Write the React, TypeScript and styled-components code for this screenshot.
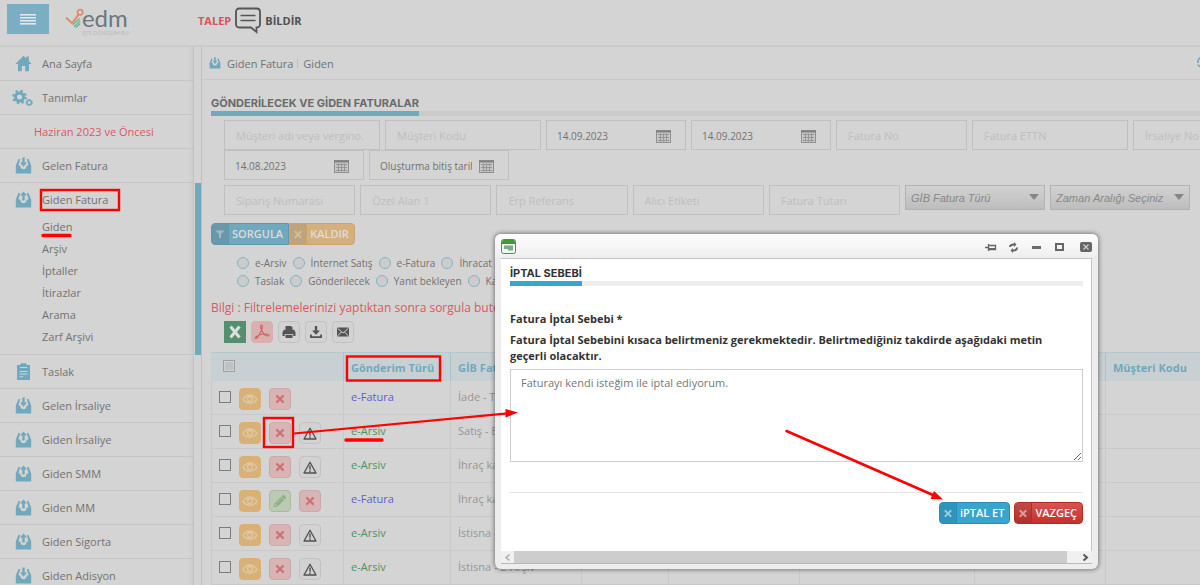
import React from "react";
import styled, { createGlobalStyle, css } from "styled-components";
import { FaTimes, FaFilter, FaPencilAlt } from "react-icons/fa";

const c = {
  page: "#d4d4d4",
  line: "#c5c5c5",
  accent: "#70a8bd",
  text: "#727272",
  faint: "#bebebe",
  red: "#d85a5e",
};

const Global = createGlobalStyle`
  * { box-sizing: border-box; }
  html, body { margin: 0; height: 100%; overflow: hidden; background: ${c.page}; }
  body, input, select, button, textarea { font-family: "Open Sans", "Noto Sans", sans-serif; }
  #root { height: 100%; }
`;

const Page = styled.div`
  position: relative;
  height: 100%;
  display: flex;
  flex-direction: column;
  overflow: hidden;
  color: ${c.text};
  font-size: 11px;
`;

/* ---------- top bar ---------- */

const TopBar = styled.header`
  flex: none;
  height: 47px;
  padding: 0 7px;
  display: flex;
  align-items: flex-start;
  border-bottom: 2px solid #cbcbcb;
`;

const MenuButton = styled.button`
  width: 42px;
  height: 30px;
  margin-top: 4px;
  padding: 0 13px;
  border: 0;
  background: #7caec3;
  display: flex;
  flex-direction: column;
  justify-content: center;
  gap: 2px;
  span {
    height: 1px;
    background: #e6e6e6;
    box-shadow: 0 1px 0 #b9cfd8;
  }
`;

const Brand = styled.a`
  display: flex;
  width: 64px;
  margin: 7px 0 0 16px;
  text-decoration: none;
`;

const BrandWords = styled.span`
  display: flex;
  flex-direction: column;
  margin-left: -2px;
  color: #6c7780;
  font: 400 24px/22px Lato, sans-serif;
  small {
    margin-top: 2px;
    color: #b8b8b8;
    font-size: 5px;
    line-height: 5px;
    white-space: nowrap;
  }
`;

const Support = styled.a`
  display: flex;
  align-items: center;
  gap: 4px;
  margin: 7px 0 0 69px;
  color: #505050;
  font-size: 11px;
  font-weight: 700;
  text-decoration: none;
  em {
    font-style: normal;
    color: #d4555a;
  }
`;

/* ---------- side menu ---------- */

const Body = styled.div`
  flex: 1;
  min-height: 0;
  display: flex;
`;

const Side = styled.nav`
  flex: none;
  width: 194px;
  border-right: 1px solid #c2c2c2;
  box-shadow: inset -4px 0 4px -3px #c8c8c8;
`;

const SideItem = styled.a<{ $open?: boolean }>`
  display: flex;
  align-items: center;
  height: 34px;
  padding-left: 15px;
  gap: 10px;
  border-bottom: 1px solid ${(p) => (p.$open ? "transparent" : c.line)};
  color: ${c.text};
  font-size: 11px;
  text-decoration: none;
  svg {
    flex: none;
    width: 17px;
    color: ${c.accent};
  }
  svg[data-wide] {
    width: 21px;
    margin: 0 -1px 0 -3px;
  }
`;

const SideNote = styled(SideItem)`
  padding-left: 34px;
  color: ${c.red};
`;

const SubMenu = styled.div`
  display: flex;
  flex-direction: column;
  margin-top: -1px;
  padding: 0 0 6px 42px;
  border-bottom: 1px solid ${c.line};
  a {
    color: ${c.text};
    line-height: 22px;
    text-decoration: none;
  }
`;

const SideScroll = styled.div`
  flex: none;
  width: 8px;
  padding: 136px 0 0 1px;
  border-right: 1px solid #bfbfbf;
  &::before {
    content: "";
    display: block;
    height: 172px;
    background: ${c.accent};
  }
`;

/* ---------- main column ---------- */

const Main = styled.main`
  flex: 1;
  min-width: 0;
  overflow: hidden;
`;

const Crumbs = styled.div`
  display: flex;
  align-items: center;
  height: 33px;
  padding-left: 7px;
  border-bottom: 1px solid #c9c9c9;
  svg {
    width: 12px;
    margin-right: 6px;
    color: ${c.accent};
  }
  span + span {
    margin-left: 4px;
    padding-left: 5px;
    border-left: 1px solid #bcbcbc;
    line-height: 9px;
  }
`;

const Reload = styled.button`
  margin: 0 -9px 0 auto;
  padding: 0;
  border: 0;
  background: none;
  && svg {
    width: 12px;
    margin: 0;
  }
`;

const Heading = styled.h1<{ $modal?: boolean }>`
  display: flex;
  margin: 0;
  border-bottom: 5px solid ${(p) => (p.$modal ? "#eeeeee" : "#cbcbcb")};
  color: ${(p) => (p.$modal ? "#333" : "#6a6a6a")};
  font: 700 11px/15px Inter, "Open Sans", sans-serif;
  span {
    margin-bottom: -5px;
    padding-top: 2px;
    border-bottom: 5px solid ${(p) => (p.$modal ? "#38a5cf" : c.accent)};
  }
`;

const Content = styled.div`
  padding: 14px 0 0 9px;
`;

const Fields = styled.div<{ $gapAbove?: number }>`
  display: flex;
  gap: 5px;
  margin: ${(p) => p.$gapAbove ?? 0}px 10px 0 13px;
`;

const fieldBox = css`
  height: 30px;
  border: 1px solid #c0c0c0;
  background: transparent;
`;

const TextField = styled.input<{ $w?: number }>`
  ${fieldBox}
  ${(p) => (p.$w ? `flex: none; width: ${p.$w}px;` : "flex: 1; min-width: 0;")}
  padding: 0 11px;
  color: ${c.text};
  font-size: 11px;
  &::placeholder {
    color: ${c.faint};
    opacity: 1;
  }
`;

const DateBox = styled.label`
  ${fieldBox}
  flex: none;
  width: 140px;
  padding: 2px 14px 0 10px;
  display: flex;
  align-items: center;
  justify-content: space-between;
  input {
    width: 92px;
    padding: 0;
    border: 0;
    background: transparent;
    color: ${c.text};
    font-size: 10px;
  }
  input::placeholder {
    color: ${c.text};
    opacity: 1;
  }
`;

const SelectBox = styled.label`
  position: relative;
  flex: none;
  width: 140px;
  height: 25px;
  select {
    appearance: none;
    width: 100%;
    height: 100%;
    padding: 0 0 0 5px;
    border: 1px solid #b2b2b2;
    border-radius: 0;
    background: linear-gradient(#d2d2d2, #bdbdbd);
    color: #888;
    font: italic 11px "Liberation Sans", Arial, sans-serif;
  }
  &::after {
    content: "";
    position: absolute;
    right: 6px;
    top: 9px;
    border: 5px solid transparent;
    border-top: 6px solid #868686;
    border-bottom: 0;
    pointer-events: none;
  }
`;

const tones = {
  query: ["#70a8bd", "#6898aa", "#6396a9"],
  clear: ["#d6b07c", "#c1a379", "#c9a572"],
  confirm: ["#38a5cf", "#3093b9", "#2b8db1"],
  cancel: ["linear-gradient(#d9534f, #c9302c)", "linear-gradient(#c04a46, #b12e2b)", "#b52b27"],
};

const ActionButton = styled.button<{ $tone: keyof typeof tones; $soft?: boolean }>`
  display: flex;
  align-items: stretch;
  height: 22px;
  padding: 0;
  overflow: hidden;
  border: 1px solid ${(p) => tones[p.$tone][2]};
  border-radius: 4px;
  background: ${(p) => tones[p.$tone][0]};
  color: ${(p) => (p.$soft ? "#dcdcdc" : "#fff")};
  font-size: 11px;
  font-weight: 600;
  line-height: 20px;
  i {
    display: flex;
    align-items: center;
    justify-content: center;
    width: 17px;
    border-right: 1px solid ${(p) => tones[p.$tone][2]};
    background: ${(p) => tones[p.$tone][1]};
  }
  i svg {
    width: 8px;
    opacity: 0.5;
  }
  span {
    padding: 0 5px 0 3px;
  }
`;

const ButtonPair = styled.div`
  display: flex;
  margin-top: 8px;
  ${ActionButton}:first-child {
    border-radius: 4px 0 0 4px;
  }
  ${ActionButton}:last-child {
    border-radius: 0 4px 4px 0;
  }
`;

const Radios = styled.div`
  display: flex;
  flex-direction: column;
  padding: 9px 0 0 26px;
  > div {
    display: flex;
    gap: 6px;
    height: 18px;
  }
  label {
    display: flex;
    align-items: center;
    gap: 6px;
    flex: none;
    white-space: nowrap;
    font-size: 10px;
  }
  input {
    appearance: none;
    width: 12px;
    height: 12px;
    margin: 0;
    border: 1px solid #83b3c5;
    border-radius: 50%;
    background: #cccccc;
  }
`;

const Info = styled.p`
  margin: 9px 0 4px;
  color: ${c.red};
  font-size: 12px;
  line-height: 18px;
  white-space: nowrap;
`;

const Tools = styled.div`
  display: flex;
  gap: 5px;
  margin: 0 0 9px 13px;
`;

const kinds = {
  excel: ["#54906f", "#54906f", "#dedede"],
  pdf: ["#d9b0b0", "#d9b0b0", "#d26468"],
  plain: ["#d2d2d2", "#c2c2c2", "#555555"],
  view: ["#d9b076", "#d9b076", "#ddcaa8"],
  remove: ["#d8b4b4", "#cba9a9", "#cd7376"],
  edit: ["#bccab3", "#a7bd9c", "#8fae81"],
};

const IconButton = styled.button<{ $kind: keyof typeof kinds }>`
  flex: none;
  display: flex;
  align-items: center;
  justify-content: center;
  width: 22px;
  height: 22px;
  padding: 0;
  border: 1px solid ${(p) => kinds[p.$kind][1]};
  border-radius: ${(p) => (p.$kind === "excel" ? 0 : 4)}px;
  background: ${(p) => kinds[p.$kind][0]};
  color: ${(p) => kinds[p.$kind][2]};
`;

/* ---------- invoice table ---------- */

const Table = styled.table`
  width: 100%;
  border-collapse: separate;
  border-spacing: 0;
  table-layout: fixed;
  th {
    height: 29px;
    padding: 0 0 0 7px;
    border-top: 1px solid #b4c8cf;
    border-left: 1px solid #a5c3cf;
    background: #c8d0d3;
    color: ${c.accent};
    font-size: 11px;
    font-weight: 700;
    text-align: left;
    white-space: nowrap;
  }
  td {
    height: 34px;
    padding: 8px 0 0 7px;
    border-left: 1px solid #c9c9c9;
    border-bottom: 1px solid #c9c9c9;
    vertical-align: top;
    line-height: 16px;
    color: #969696;
    white-space: nowrap;
    overflow: hidden;
  }
  th:first-child {
    padding: 0 0 3px 11px;
    border-left-color: #c8d0d3;
  }
  td:first-child {
    padding-top: 7px;
  }
`;

const Check = styled.input`
  appearance: none;
  display: block;
  flex: none;
  width: 12px;
  height: 12px;
  margin: 3px 0 0;
  border: 1px solid #7d7d7d;
  th & {
    margin: 0;
    border-color: #a0a0a0;
    background: #bfc2c3;
    box-shadow: inset 0 0 0 1px #d2d2d2;
  }
`;

const RowTools = styled.div`
  display: flex;
  gap: 8px;
`;

const Kind = styled.span<{ $archive: boolean }>`
  color: ${(p) => (p.$archive ? "#50915c" : "#5d5dd0")};
`;

/* ---------- dialog ---------- */

const Dialog = styled.section`
  position: absolute;
  top: 234px;
  left: 495px;
  right: 102px;
  padding: 0 6px 5px;
  border-radius: 6px;
  background: #ededed;
  box-shadow: 0 0 4px 1px rgba(0, 0, 0, 0.42);
`;

const DialogBar = styled.div`
  display: flex;
  align-items: center;
  height: 24px;
  margin: 0 -6px;
  padding: 0 6px;
  border-radius: 6px 6px 0 0;
  background: linear-gradient(#fdfdfd, #eeeeee);
`;

const BarTools = styled.div`
  display: flex;
  gap: 10px;
  margin: 2px 0 0 auto;
  button {
    display: flex;
    width: 13px;
    height: 12px;
    padding: 0;
    border: 0;
    background: none;
  }
  button:last-child {
    margin-left: 3px;
  }
`;

const DialogBody = styled.div`
  padding: 5px 8px 0 9px;
  height: 293px;
  border: solid #c6c6c6;
  border-width: 1px 1px 0 0;
  background: #fff;
`;

const Prompt = styled.label`
  display: block;
  margin-top: 25px;
  color: #333;
  font-size: 11px;
  font-weight: 700;
  line-height: 16px;
  span {
    display: block;
    margin-top: 5px;
    padding-right: 20px;
  }
`;

const Reason = styled.textarea`
  display: block;
  width: 100%;
  height: 93px;
  margin-top: 5px;
  padding: 5px 10px;
  border: 1px solid #cfcfcf;
  color: #777;
  font-size: 11px;
  font-weight: 400;
  line-height: 16px;
`;

const DialogActions = styled.div`
  display: flex;
  justify-content: flex-end;
  gap: 4px;
  margin-top: 30px;
  padding-top: 9px;
  border-top: 1px solid #e4e4e4;
`;

const HScroll = styled.div`
  display: flex;
  align-items: center;
  height: 13px;
  background: #f0f0f0;
  border-bottom: 1px solid #b9b9b9;
  svg {
    flex: none;
    width: 13px;
  }
  div {
    flex: 1;
    height: 100%;
    margin-right: 12px;
    background: #cdcdcd;
  }
`;

const Marks = styled.svg`
  position: absolute;
  left: 0;
  top: 0;
  pointer-events: none;
`;

/* ---------- drawings ---------- */

const Tray = ({ up }: { up?: boolean }) => (
  <svg viewBox="0 0 17 17" fill="currentColor" aria-hidden>
    <path d="M3.5 2H5.2L3.4 8.6H5.2C5.4 11 6.6 12.2 8.5 12.2S11.6 11 11.8 8.6H13.6L11.8 2H13.5L16.2 8.6V16.4H.8V8.6Z" />
    <path d={up ? "M8.5 0.4L12 4.4H9.7V9.6H7.3V4.4H5Z" : "M7.3 0.4H9.7V5.4H12L8.5 9.8L5 5.4H7.3Z"} />
  </svg>
);

const Home = () => (
  <svg viewBox="0 0 17 17" fill="currentColor" aria-hidden>
    <path d="M8.5 .8L11.2 3.5V1.5H13.8V6L16.6 9H14V16.3H10.2V11H6.8V16.3H3V9H.4Z" />
  </svg>
);

const Gears = () => (
  <svg data-wide="" viewBox="0 0 21 18" fill="none" stroke="currentColor" aria-hidden>
    <circle cx="7.5" cy="8" r="4" strokeWidth="3" />
    <circle cx="7.5" cy="8" r="6.3" strokeWidth="2" strokeDasharray="2.5 2.45" />
    <circle cx="17.2" cy="13.5" r="2.2" strokeWidth="1.4" />
    <circle cx="17.2" cy="13.5" r="3.2" strokeWidth="1" strokeDasharray="1.3 1.21" />
  </svg>
);

const Clipboard = () => (
  <svg viewBox="0 0 17 17" aria-hidden>
    <path d="M2 2H5L6 .3H11L12 2H15V17H2Z" fill="currentColor" />
    <path d="M5 4.5H12M4.5 8.5H12.5M4.5 11H12.5M4.5 13.7H8" stroke="#c9d3d7" strokeWidth="1" />
  </svg>
);

const Calendar = () => (
  <svg width="15" height="13" viewBox="0 0 15 13" aria-hidden>
    <rect x=".5" y=".5" width="14" height="12" fill="#c6c6c6" stroke="#8f8f8f" />
    <path d="M0 1.5H15" stroke="#808080" strokeWidth="2" />
    <path d="M2 4.5H13M2 7.5H13M2 10.5H13M4.5 3.5V11.5M7.5 3.5V11.5M10.5 3.5V11.5" stroke="#969696" />
  </svg>
);

const Printer = () => (
  <svg width="14" height="14" viewBox="0 0 14 14" fill="currentColor" aria-hidden>
    <path d="M3.5 1H9L10.5 2.5V5H3.5Z" />
    <path d="M2 4.8H12L13.5 7V11H11.3V9H2.7V11H.5V7Z" />
    <path d="M3.5 9.800H10.5V13H3.5Z" />
  </svg>
);

const Download = () => (
  <svg width="14" height="14" viewBox="0 0 14 14" fill="currentColor" aria-hidden>
    <path d="M5.8 1H8.2V5.5H11L7 9.8L3 5.5H5.8Z" />
    <path d="M1 9.5H2.8V11.2H11.2V9.5H13V13H1Z" />
  </svg>
);

const Envelope = () => (
  <svg width="12" height="10" viewBox="0 0 12 10" aria-hidden>
    <rect width="12" height="9" y=".5" rx="1" fill="currentColor" />
    <path d="M.8 1.5L6 6L11.2 1.5M.8 8.8L4.3 5M11.2 8.8L7.7 5" fill="none" stroke="#d2d2d2" />
  </svg>
);

const Eye = () => (
  <svg width="16" height="12" viewBox="0 0 16 12" fill="none" stroke="currentColor" aria-hidden>
    <path d="M1 6.5C3 3.4 5.3 2 8 2S13 3.4 15 6.5C13 9.2 10.8 10.3 8 10.3S3 9.2 1 6.5Z" strokeWidth="1.3" />
    <circle cx="8" cy="6" r="2.5" strokeWidth="1.3" />
  </svg>
);

const Warning = () => (
  <svg width="14" height="13" viewBox="0 0 14 13" fill="none" stroke="#505050" aria-hidden>
    <path d="M7 1.2L13 12H1Z" strokeWidth="1.3" strokeLinejoin="round" />
    <path d="M7 4.5V8.7M7 9.6V11" strokeWidth="1.4" />
  </svg>
);

const Pdf = () => (
  <svg width="16" height="16" viewBox="0 0 16 16" fill="none" stroke="currentColor" strokeWidth="1.2" aria-hidden>
    <path d="M7.5 1C6 1 6.6 4.5 8 7C9.5 9.8 12 12 14 12C16 11.6 14.5 10 11 10C7 10 3.5 11.5 1.6 13.3C.6 14.8 2.4 15 4 12.6C6 9.5 8.6 4 8.3 1.8Z" />
  </svg>
);

const AppIcon = () => (
  <svg width="15" height="15" viewBox="0 0 15 15" aria-hidden>
    <rect x=".5" y=".5" width="14" height="14" rx="2" fill="#f1f4f1" stroke="#6a7a6c" />
    <path d="M1 2.5Q1 1 2.5 1H12.5Q14 1 14 2.5V5H1Z" fill="#3f9d2f" />
    <path d="M3 6.5H12V11.5H7V10H3Z" fill="#7cab8c" />
  </svg>
);

/* ---------- data ---------- */

const submenu = ["Giden", "Arşiv", "İptaller", "İtirazlar", "Arama", "Zarf Arşivi"];

const lowerMenu: [string, boolean][] = [
  ["Gelen İrsaliye", false],
  ["Giden İrsaliye", true],
  ["Giden SMM", true],
  ["Giden MM", true],
  ["Giden Sigorta", true],
  ["Giden Adisyon", false],
];

const radioRows = [
  ["e-Arsiv", "İnternet Satış", "e-Fatura", "İhracat"],
  ["Taslak", "Gönderilecek", "Yanıt bekleyen", "Kabul"],
];

type Tool = "remove" | "warn" | "edit";
const rows: { archive: boolean; note: string; tools: Tool[] }[] = [
  { archive: false, note: "İade - Temel", tools: ["remove"] },
  { archive: true, note: "Satış - E-Arşiv", tools: ["remove", "warn"] },
  { archive: true, note: "İhraç kayıtlı", tools: ["remove", "warn"] },
  { archive: false, note: "İhraç kayıtlı", tools: ["edit", "remove"] },
  { archive: true, note: "İstisna - E-Arşiv", tools: ["remove", "warn"] },
  { archive: true, note: "İstisna - E-Arşiv", tools: ["remove", "warn"] },
];

const DateField = ({ label, value }: { label: string; value?: string }) => (
  <DateBox>
    <input aria-label={label} placeholder={label} defaultValue={value} />
    <Calendar />
  </DateBox>
);

const RowTool = ({ tool }: { tool: Tool }) => {
  if (tool === "remove") return <IconButton $kind="remove" aria-label="İptal"><FaTimes size={12} /></IconButton>;
  if (tool === "edit") return <IconButton $kind="edit" aria-label="Düzenle"><FaPencilAlt size={12} /></IconButton>;
  return <IconButton $kind="plain" aria-label="Uyarı"><Warning /></IconButton>;
};

export default function App() {
  return (
    <Page>
      <Global />
      <TopBar>
        <MenuButton aria-label="Menü"><span /><span /><span /><span /></MenuButton>
        <Brand href="#">
          <svg width="20" height="24" viewBox="0 0 20 24" fill="none" aria-hidden>
            <path d="M1 10.5L7.5 16.5L15 6.5" stroke="#d98f6c" strokeWidth="2.2" />
            <circle cx="16" cy="4.8" r="2.8" stroke="#d98f6c" strokeWidth="1.8" />
            <path d="M8.5 18L15.5 11.5M9.5 20.2L16 14M11.5 21L16 16.8" stroke="#68ae8c" strokeWidth="1.3" />
          </svg>
          <BrandWords>edm<small>İŞTE DÖNÜŞÜM BU!</small></BrandWords>
        </Brand>
        <Support href="#">
          <em>TALEP</em>
          <svg width="26" height="27" viewBox="0 0 26 27" fill="none" stroke="#555" aria-hidden>
            <path d="M4.5 1.5H21.5Q25 1.5 25 5V17Q25 20.5 21.5 20.5V25L16 20.5H4.5Q1 20.5 1 17V5Q1 1.5 4.5 1.5Z" strokeWidth="1.8" />
            <path d="M5.5 8.5H20.5M5.5 13.5H20.5" strokeWidth="1.6" />
          </svg>
          BİLDİR
        </Support>
      </TopBar>

      <Body>
        <Side>
          <SideItem href="#"><Home />Ana Sayfa</SideItem>
          <SideItem href="#"><Gears />Tanımlar</SideItem>
          <SideNote href="#">Haziran 2023 ve Öncesi</SideNote>
          <SideItem href="#"><Tray />Gelen Fatura</SideItem>
          <SideItem href="#" $open><Tray up />Giden Fatura</SideItem>
          <SubMenu>{submenu.map((s) => <a href="#" key={s}>{s}</a>)}</SubMenu>
          <SideItem href="#"><Clipboard />Taslak</SideItem>
          {lowerMenu.map(([name, up]) => (
            <SideItem href="#" key={name}><Tray up={up} />{name}</SideItem>
          ))}
        </Side>
        <SideScroll />

        <Main>
          <Crumbs>
            <Tray />
            <span>Giden Fatura</span>
            <span>Giden</span>
            <Reload aria-label="Yenile">
              <svg height="12" viewBox="0 0 12 12" fill="none" stroke="currentColor" strokeWidth="1.6">
                <path d="M1 7V4.5Q2.5 1 6 1T11 4.5M11 7Q10 11 6 11T1 8.5" />
              </svg>
            </Reload>
          </Crumbs>
          <Content>
            <Heading><span>GÖNDERİLECEK VE GİDEN FATURALAR</span></Heading>
            <Fields $gapAbove={4}>
              <TextField $w={156} aria-label="Müşteri adı" placeholder="Müşteri adı veya vergino." />
              <TextField $w={156} aria-label="Müşteri Kodu" placeholder="Müşteri Kodu" />
              <DateField label="Başlangıç tarihi" value="14.09.2023" />
              <DateField label="Bitiş tarihi" value="14.09.2023" />
              <TextField $w={131} aria-label="Fatura No" placeholder="Fatura No" />
              <TextField $w={156} aria-label="Fatura ETTN" placeholder="Fatura ETTN" />
              <TextField $w={131} aria-label="İrsaliye No" placeholder="İrsaliye No" />
            </Fields>
            <Fields>
              <DateField label="Oluşturma tarihi" value="14.08.2023" />
              <DateField label="Oluşturma bitiş tarihi" />
            </Fields>
            <Fields $gapAbove={5}>
              {["Sipariş Numarası", "Özel Alan 1", "Erp Referans", "Alıcı Etiketi", "Fatura Tutarı"].map((p) => (
                <TextField key={p} aria-label={p} placeholder={p} />
              ))}
              {["GİB Fatura Türü", "Zaman Aralığı Seçiniz"].map((p) => (
                <SelectBox key={p}>
                  <select aria-label={p}><option>{p}</option></select>
                </SelectBox>
              ))}
            </Fields>
            <ButtonPair>
              <ActionButton $tone="query" $soft><i><FaFilter /></i><span>SORGULA</span></ActionButton>
              <ActionButton $tone="clear" $soft><i><FaTimes /></i><span>KALDIR</span></ActionButton>
            </ButtonPair>
            <Radios>
              {radioRows.map((group, i) => (
                <div key={i}>
                  {group.map((r) => <label key={r}><input type="radio" name={"filter" + i} />{r}</label>)}
                </div>
              ))}
            </Radios>
            <Info>Bilgi : Filtrelemelerinizi yaptıktan sonra sorgula buton</Info>
            <Tools>
              <IconButton $kind="excel" aria-label="Excel">
                <svg width="14" height="14" viewBox="0 0 14 14" stroke="currentColor" strokeWidth="3"><path d="M2.5 1.5L11.5 12.5M11.5 1.5L2.5 12.5" /></svg>
              </IconButton>
              <IconButton $kind="pdf" aria-label="PDF"><Pdf /></IconButton>
              <IconButton $kind="plain" aria-label="Yazdır"><Printer /></IconButton>
              <IconButton $kind="plain" aria-label="İndir"><Download /></IconButton>
              <IconButton $kind="plain" aria-label="E-posta"><Envelope /></IconButton>
            </Tools>
            <Table>
              <colgroup>
                <col style={{ width: 132 }} /><col style={{ width: 107 }} /><col style={{ width: 131 }} />
                <col style={{ width: 87 }} /><col style={{ width: 131 }} /><col style={{ width: 175 }} />
                <col style={{ width: 131 }} /><col />
              </colgroup>
              <thead>
                <tr>
                  <th><Check type="checkbox" aria-label="Tümünü seç" /></th>
                  <th>Gönderim Türü</th>
                  <th>GİB Fatura Türü</th>
                  <th /><th /><th /><th />
                  <th>Müşteri Kodu</th>
                </tr>
              </thead>
              <tbody>
                {rows.map((r, i) => (
                  <tr key={i}>
                    <td>
                      <RowTools>
                        <Check type="checkbox" aria-label="Seç" />
                        <IconButton $kind="view" aria-label="Görüntüle"><Eye /></IconButton>
                        {r.tools.map((t) => <RowTool key={t} tool={t} />)}
                      </RowTools>
                    </td>
                    <td><Kind $archive={r.archive}>{r.archive ? "e-Arsiv" : "e-Fatura"}</Kind></td>
                    <td>{r.note}</td>
                    <td /><td /><td /><td /><td />
                  </tr>
                ))}
              </tbody>
            </Table>
          </Content>
        </Main>
      </Body>

      <Dialog role="dialog" aria-label="İptal Sebebi">
        <DialogBar>
          <AppIcon />
          <BarTools>
            <button aria-label="Sabitle">
              <svg width="13" height="12" viewBox="0 0 13 12" fill="none" stroke="#666"><path d="M1 6.5H4M4.5 3V10M5 4.5H11.5V8.5H5" strokeWidth="1.3" /><path d="M5 8H12" strokeWidth="2" /></svg>
            </button>
            <button aria-label="Yenile">
              <svg width="13" height="12" viewBox="0 0 13 12" fill="none" stroke="#666" strokeWidth="2"><path d="M3 6Q3 3.5 7 3.5M10 6.5Q10 9.5 6 9.5" /><path d="M7 1V6L9.5 3.5ZM6 7V12L3.5 9.5Z" fill="#666" stroke="none" /></svg>
            </button>
            <button aria-label="Küçült">
              <svg width="13" height="12" viewBox="0 0 13 12"><rect x="2" y="5" width="9" height="3" fill="#6c6c6c" /></svg>
            </button>
            <button aria-label="Büyüt">
              <svg width="13" height="12" viewBox="0 0 13 12"><rect x="3" y="3" width="7" height="6" fill="none" stroke="#666" strokeWidth="2" /></svg>
            </button>
            <button aria-label="Kapat">
              <svg width="13" height="12" viewBox="0 0 13 12"><rect x="1" y="1" width="12" height="10" rx="2" fill="#666" /><path d="M4.5 3.5L9.5 8.5M9.5 3.5L4.5 8.5" stroke="#ccc" strokeWidth="1.3" /></svg>
            </button>
          </BarTools>
        </DialogBar>
        <DialogBody>
          <Heading as="h2" $modal><span>İPTAL SEBEBİ</span></Heading>
          <Prompt>
            Fatura İptal Sebebi *
            <span>Fatura İptal Sebebini kısaca belirtmeniz gerekmektedir. Belirtmediğiniz takdirde aşağıdaki metin geçerli olacaktır.</span>
            <Reason defaultValue="Faturayı kendi isteğim ile iptal ediyorum." />
          </Prompt>
          <DialogActions>
            <ActionButton $tone="confirm"><i><FaTimes /></i><span>iPTAL ET</span></ActionButton>
            <ActionButton $tone="cancel"><i><FaTimes /></i><span>VAZGEÇ</span></ActionButton>
          </DialogActions>
        </DialogBody>
        <HScroll>
          <svg height="9" viewBox="0 0 13 9" fill="none" stroke="#b0b0b0" strokeWidth="1.6"><path d="M8.5 1.5L5 4.5L8.5 7.5" /></svg>
          <div />
          <svg height="9" viewBox="0 0 13 9" fill="none" stroke="#555" strokeWidth="2"><path d="M4.5 1.5L8 4.5L4.5 7.5" /></svg>
        </HScroll>
      </Dialog>

      <Marks width="1200" height="585" viewBox="0 0 1200 585" fill="none" stroke="#ff0000" aria-hidden>
        <g strokeWidth="2.4">
          <rect x="41" y="190" width="78" height="20" />
          <rect x="347" y="356.5" width="93" height="24" />
          <rect x="264" y="418" width="29" height="29" />
        </g>
        <path d="M43 235.5H70M346 440H382" strokeWidth="3.4" strokeLinecap="round" />
        <path d="M294 433.5L508 413.3" strokeWidth="2.2" />
        <path d="M786.5 431L933 495" strokeWidth="2.6" strokeLinecap="round" />
        <g fill="#ff0000" stroke="none">
          <path d="M518 412.5L505.5 409V417.5Z" />
          <path d="M943 499.5L934 491L930.5 499Z" />
        </g>
      </Marks>
    </Page>
  );
}
